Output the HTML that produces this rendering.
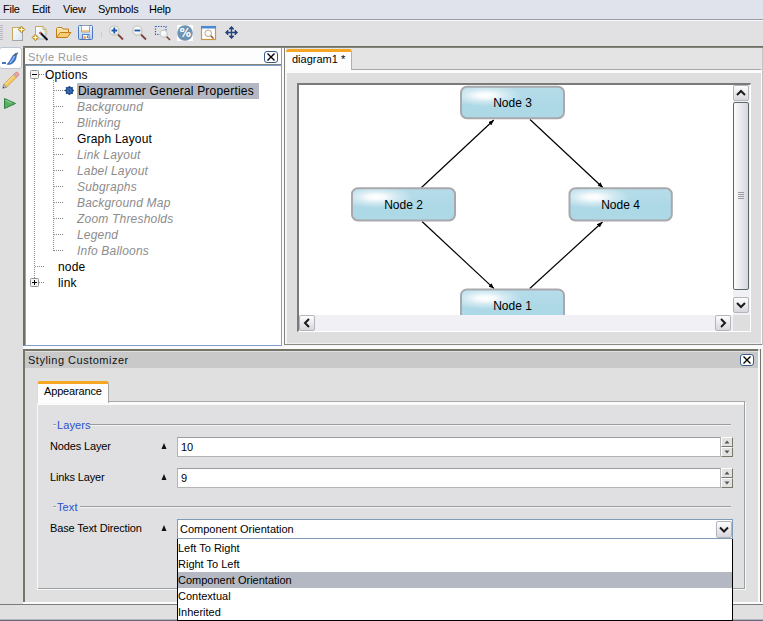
<!DOCTYPE html>
<html><head><meta charset="utf-8"><title>Diagrammer Designer</title>
<style>
html,body{margin:0;padding:0;}
body{width:763px;height:621px;overflow:hidden;background:#e0e0e0;position:relative;font-family:"Liberation Sans",sans-serif;font-size:11px;color:#000;}
.abs{position:absolute;}
#menubar{left:0;top:0;width:763px;height:19px;background:#e0e3ec;border-bottom:1px solid #9a9aa2;}
#menubar span{position:absolute;top:3px;font-size:11px;letter-spacing:-0.25px;}
#toolbar{left:0;top:20px;width:763px;height:26px;background:#e1e1e4;border-top:1px solid #fbfbfb;box-sizing:border-box;}
#leftbar{left:0;top:46px;width:23px;height:303px;background:#e0e0e0;}
#rules{left:23px;top:46px;width:259px;height:300px;box-sizing:border-box;border:2px solid #6e6e62;border-right:1px solid #7fa0cc;border-bottom:1px solid #7fa0cc;background:#fff;box-shadow:inset 1px 0 0 #8aa8d0;}
#ruleshead{left:0;top:0;width:256px;height:16px;background:#fdfdfd;border-bottom:1px solid #84847e;box-shadow:0 1px 0 #7fa0cc;}
#ruleshead .t{position:absolute;left:3px;top:3px;color:#9a9a9a;letter-spacing:0.4px;}
.tree{font-size:12px;letter-spacing:0.2px;white-space:nowrap;}
.tree div{position:absolute;height:16px;line-height:16px;}
.tree .g{color:#8c8c8c;font-style:italic;}
.dotsh{position:absolute;height:1px;background-image:linear-gradient(to right,#808080 1px,transparent 1px);background-size:2px 1px;}
.dotsv{position:absolute;width:1px;background-image:linear-gradient(to bottom,#808080 1px,transparent 1px);background-size:1px 2px;}

.sbtn{position:absolute;width:16px;height:16px;box-sizing:border-box;border:1px solid #b4b4bc;border-radius:2px;background:linear-gradient(to bottom,#fdfdfd 0%,#ececf0 45%,#d6d6dc 100%);}
.sbtn svg{position:absolute;left:0;top:0}

#bottom{left:23px;top:349px;width:735px;height:253px;box-sizing:border-box;border-top:2px solid #75756a;border-left:2px solid #75756a;background:#e0e0e0;}
#bhead{left:0;top:1px;width:733px;height:16px;background:#c9c9c9;}
#bhead .t{position:absolute;left:3px;top:2px;letter-spacing:0.5px;color:#111;}
.closeb{position:absolute;width:14px;height:12px;box-sizing:border-box;border:1px solid #3a5a8c;border-radius:3px;background:#fff;}
.closeb svg{position:absolute;left:0;top:0}
.lbl{position:absolute;font-size:11px;white-space:nowrap;letter-spacing:-0.15px;}
.fld{position:absolute;background:#fff;box-sizing:border-box;border:1px solid #b4b4b4;border-top-color:#9c9c9c;}
.fld span{position:absolute;left:3px;top:3px;font-size:11px;}
.tri{position:absolute;width:0;height:0;border-left:2.5px solid transparent;border-right:2.5px solid transparent;border-bottom:6px solid #111;}
.spin{position:absolute;width:12px;height:10px;box-sizing:border-box;border:1px solid;border-color:#fcfcfc #77776c #77776c #fcfcfc;background:#e2e2e2;}
.spin svg{position:absolute;left:0;top:0}
.gl{position:absolute;height:1px;background:#9c9c9c;box-shadow:0 1px 0 #f4f4f4;}
.gt{position:absolute;font-size:11px;color:#2a50d0;letter-spacing:0.1px;}
#pop{left:177px;top:539px;width:556px;height:82px;box-sizing:border-box;border:1px solid #000;border-top:none;background:#fff;}
#pop div{position:absolute;left:0;width:554px;height:16px;line-height:16px;font-size:11px;text-indent:0px;}
</style></head><body>
<div id="menubar" class="abs"><span style="left:3px">File</span><span style="left:32px">Edit</span><span style="left:63px">View</span><span style="left:98px">Symbols</span><span style="left:149px">Help</span></div>
<div id="toolbar" class="abs">
<svg class="abs" style="left:0;top:0" width="260" height="25" viewBox="0 21 260 25">
<defs>
<linearGradient id="docg" x1="0" y1="0" x2="1" y2="1"><stop offset="0" stop-color="#ffffff"/><stop offset="1" stop-color="#d4e6f2"/></linearGradient>
<radialGradient id="lens" cx="0.4" cy="0.35" r="0.7"><stop offset="0" stop-color="#fff"/><stop offset="1" stop-color="#e8eef4"/></radialGradient>
</defs>
<!-- grip -->
<g fill="#b8b8c4"><rect x="0" y="25" width="3" height="1"/><rect x="0" y="27" width="3" height="1"/><rect x="0" y="29" width="3" height="1"/><rect x="0" y="31" width="3" height="1"/><rect x="0" y="33" width="3" height="1"/><rect x="0" y="35" width="3" height="1"/><rect x="0" y="37" width="3" height="1"/><rect x="0" y="39" width="3" height="1"/></g>
<!-- new -->
<rect x="12.500" y="27.500" width="10" height="13" fill="url(#docg)" stroke="#a4a4a0" stroke-width="1"/>
<path d="M12.500,40 L12.500,27.500 L20,27.500" fill="none" stroke="#c8a858" stroke-width="1"/>
<path d="M21.500,26.200 L24.800,29.500 L21.500,32.800 L18.200,29.500 z" fill="#c8a030" stroke="#b08820" stroke-width="0.800"/>
<path d="M21.500,27.300 L21.500,31.700 M19.300,29.500 L23.700,29.500" stroke="#fffdf0" stroke-width="1"/>
<!-- wizard -->
<path d="M35.500,26.500 L43,26.500 L46,29.500 L46,39 L35.500,39 z" fill="url(#docg)" stroke="#b4b4ac" stroke-width="1"/>
<path d="M35.500,39 L35.500,26.500 L43,26.500 L46,29.500" fill="none" stroke="#c8a858" stroke-width="1"/>
<path d="M43,26.500 L43,29.500 L46,29.500" fill="#e8dcc0" stroke="#c8a858" stroke-width="0.800"/>
<path d="M40,32.500 L47.500,40" stroke="#101020" stroke-width="2" fill="none"/>
<path d="M39.600,32.100 L41,33.500" stroke="#c86050" stroke-width="2" fill="none"/>
<path d="M35.400,34.200 L38.700,37.500 L35.400,40.800 L32.100,37.500 z" fill="#c8a030" stroke="#b08820" stroke-width="0.800"/>
<path d="M35.400,35.300 L35.400,39.700 M33.200,37.500 L37.600,37.500" stroke="#fffdf0" stroke-width="1"/>
<g fill="#f0d030"><rect x="44.500" y="30.500" width="1" height="1"/><rect x="46.500" y="31" width="1" height="1"/><rect x="45.500" y="32.500" width="1" height="1"/><rect x="47" y="33" width="1" height="1"/></g>
<!-- folder -->
<path d="M56.500,37.500 L56.500,28.500 L57.500,27.500 L62,27.500 L63,29 L68.500,29 L68.500,32" fill="#fbe2a0" stroke="#c27c1c" stroke-width="1"/>
<path d="M56.500,37.500 L60.300,32.500 L71,32.500 L67.300,37.500 z" fill="#f8cc70" stroke="#c27c1c" stroke-width="1"/>
<path d="M58,28.500 L61.500,28.500" stroke="#fff8e0" stroke-width="1"/>
<!-- save -->
<linearGradient id="svg1" x1="0" y1="0" x2="0" y2="1"><stop offset="0" stop-color="#eef4fb"/><stop offset="1" stop-color="#b4cdea"/></linearGradient>
<rect x="78.500" y="25.500" width="14" height="14" rx="1" fill="url(#svg1)" stroke="#4c76c0" stroke-width="1"/>
<rect x="81.500" y="25.500" width="8" height="6.500" fill="#fbfdff" stroke="#8c98a8" stroke-width="0.800"/>
<rect x="82" y="30.300" width="7" height="1.400" fill="#f2b868"/>
<rect x="82.500" y="34.500" width="6.500" height="5" fill="#f6f8fa" stroke="#4c76c0" stroke-width="0.900"/>
<rect x="83.300" y="36.300" width="2.800" height="2.800" fill="#f0a848"/>
<rect x="87" y="35.500" width="1" height="2.500" fill="#708098"/>
<!-- sep -->
<rect x="101" y="32" width="1" height="5" fill="#c0ccd8"/>
<!-- zoom in -->
<path d="M118,34.500 L123,39.500" stroke="#7a4438" stroke-width="1.800"/>
<circle cx="114.300" cy="30.500" r="4.700" fill="url(#lens)" stroke="#c8c8b8" stroke-width="1.200"/>
<path d="M111.500,30.500 L117.200,30.500 M114.300,27.600 L114.300,33.400" stroke="#1c58a8" stroke-width="1.800"/>
<!-- zoom out -->
<path d="M141,34.500 L146,39.500" stroke="#7a4438" stroke-width="1.800"/>
<circle cx="137.400" cy="30.500" r="4.700" fill="url(#lens)" stroke="#c8c8b8" stroke-width="1.200"/>
<path d="M134.500,30.500 L140.300,30.500" stroke="#1c58a8" stroke-width="1.800"/>
<!-- zoom rect -->
<rect x="155.500" y="26.500" width="10.500" height="8" fill="none" stroke="#2860b8" stroke-width="1.200" stroke-dasharray="1.300,1.300"/>
<path d="M166.500,36.500 L170,40" stroke="#7a4438" stroke-width="1.600"/>
<circle cx="163.700" cy="33.700" r="3.600" fill="url(#lens)" stroke="#c8c8c0" stroke-width="1.100"/>
<!-- percent -->
<rect x="177" y="25" width="16" height="16" fill="#fdfdfd"/>
<circle cx="185" cy="33" r="7.800" fill="#6f93b2"/>
<text x="185.200" y="37.300" style="font-family:'DejaVu Sans','Liberation Sans',sans-serif;font-size:11.500px;font-weight:700" fill="#fff" text-anchor="middle">%</text>
<!-- fit -->
<rect x="201.500" y="26.500" width="14" height="13" fill="#fff" stroke="#c89a3c" stroke-width="1.200"/>
<rect x="201" y="26" width="15" height="2.500" fill="#4a88d8"/>
<path d="M210.500,35.500 L213.500,38.500" stroke="#a04830" stroke-width="1.400"/>
<circle cx="208.200" cy="33.300" r="3.300" fill="#fafafa" stroke="#b8a888" stroke-width="1"/>
<!-- pan -->
<g stroke="#28467a" stroke-width="1.400" fill="none"><path d="M231.500,27 L231.500,38 M226,32.500 L237,32.500"/><path fill="#28467a" stroke-width="0.800" d="M229,29 L231.500,26.300 L234,29 z M229,36 L231.500,38.700 L234,36 z M228,30 L225.300,32.500 L228,35 z M235,30 L237.700,32.500 L235,35 z"/></g>
</svg>
</div>
<div id="leftbar" class="abs">
<div class="abs" style="left:-1px;top:1px;width:23px;height:22px;box-sizing:border-box;border:1px solid #bcc6d2;border-radius:3px;background:#fff"></div>
<svg class="abs" style="left:0;top:0" width="23" height="80" viewBox="0 46 23 80">
<!-- feather -->
<path d="M2,63 L6,63" stroke="#3468b8" stroke-width="1.800"/>
<path d="M7,64.300 C9,62.500 10.500,59.500 12,57 C13,55.300 14.500,54 16,53.500 C16.600,55 16.500,57 15.800,59 C14.800,61.500 13,63.500 10.500,64.200 C9.300,64.500 8,64.600 7,64.300 z" fill="#3a74cc" stroke="#2a58a8" stroke-width="0.500"/>
<path d="M10,62.800 C12,61 13.500,58.500 14.500,56" stroke="#9cc0ee" stroke-width="1.300" fill="none"/>
<path d="M13.300,55.800 L15,54 L17.900,52.700 L16.600,55.200" fill="#5c6c80" stroke="#4c5c70" stroke-width="0.600"/>
<!-- pencil -->
<path d="M3.700,84.500 L13.600,74.600 L16.400,77.400 L6.500,87.300 z" fill="#f2c860" stroke="#c8963c" stroke-width="0.700"/>
<path d="M5.200,84.500 L14.300,75.400" stroke="#fbe8a8" stroke-width="1"/>
<path d="M13.600,74.600 L15.400,72.800 C16.100,72.100 17.200,72.100 17.900,72.800 L18.300,73.200 C19,73.900 19,75 18.300,75.700 L16.400,77.400 z" fill="#f0a0a0" stroke="#c87070" stroke-width="0.700"/>
<path d="M13.600,74.600 L16.400,77.400" stroke="#b0b0c0" stroke-width="1.200"/>
<path d="M3.700,84.500 L2.800,88.200 L6.500,87.300 z" fill="#e8d0a8" stroke="#5068a8" stroke-width="0.600"/>
<path d="M2.800,88.200 L3.300,86.500 L4.500,87.700 z" fill="#283c90"/>
<!-- play -->
<path d="M4.500,98.500 L15.500,103.500 L4.500,108.500 z" fill="#58b060" stroke="#2e8440" stroke-width="1"/>
<path d="M5.500,100.300 L11.500,103" stroke="#8cd090" stroke-width="1.200"/>
</svg>
</div>
<div id="rules" class="abs">
 <div id="ruleshead" class="abs"><span class="t">Style Rules</span><div class="closeb" style="left:239px;top:3px"><svg width="12" height="10"><path d="M2.500,1.500 L9.500,8.500 M9.500,1.500 L2.500,8.500" stroke="#000" stroke-width="1.400" fill="none"/></svg></div></div>
 <div class="tree">
  <svg class="abs" style="left:0;top:18px" width="80" height="230" viewBox="25 66 80 230">
   <g stroke="#8a8a8a" stroke-width="1" stroke-dasharray="1,1" fill="none">
    <path d="M34.500,79 L34.500,278"/><path d="M53.500,80 L53.500,251"/>
    <path d="M39,74.500 L45,74.500"/>
    <path d="M54,90.500 L65,90.500"/><path d="M54,106.500 L63,106.500"/><path d="M54,122.500 L63,122.500"/><path d="M54,138.500 L63,138.500"/><path d="M54,154.500 L63,154.500"/><path d="M54,170.500 L63,170.500"/><path d="M54,186.500 L63,186.500"/><path d="M54,202.500 L63,202.500"/><path d="M54,218.500 L63,218.500"/><path d="M54,234.500 L63,234.500"/><path d="M54,250.500 L63,250.500"/>
    <path d="M35,266.500 L45,266.500"/><path d="M39,282.500 L45,282.500"/>
   </g>
   <rect x="30.500" y="70.500" width="8" height="8" rx="1" fill="#f4f4f4" stroke="#909090"/><path d="M32,74.500 L37,74.500" stroke="#000" stroke-width="1"/>
   <rect x="30.500" y="278.500" width="8" height="8" rx="1" fill="#f4f4f4" stroke="#909090"/><path d="M32,282.500 L37,282.500 M34.500,280 L34.500,285" stroke="#000" stroke-width="1"/>
   <!-- gear -->
   <circle cx="69.400" cy="90.500" r="3.800" fill="#1c4c90"/>
   <g stroke="#1c4c90" stroke-width="1.600"><path d="M69.400,86 L69.400,95 M64.900,90.500 L73.900,90.500 M66.200,87.300 L72.600,93.700 M72.600,87.300 L66.200,93.700"/></g>
   <circle cx="69.400" cy="90.500" r="2.300" fill="#4a7ac0"/>
   <circle cx="69.400" cy="90.500" r="1" fill="#143c78"/>
  </svg>

  <div style="left:20px;top:19px">Options</div>
  <div style="left:52px;top:35px;width:182px;background:#b4b8c2"></div>
  <div style="left:53px;top:35px">Diagrammer General Properties</div>
  <div class="g" style="left:52px;top:51px">Background</div>
  <div class="g" style="left:52px;top:67px">Blinking</div>
  <div style="left:52px;top:83px">Graph Layout</div>
  <div class="g" style="left:52px;top:99px">Link Layout</div>
  <div class="g" style="left:52px;top:115px">Label Layout</div>
  <div class="g" style="left:52px;top:131px">Subgraphs</div>
  <div class="g" style="left:52px;top:147px">Background Map</div>
  <div class="g" style="left:52px;top:163px">Zoom Thresholds</div>
  <div class="g" style="left:52px;top:179px">Legend</div>
  <div class="g" style="left:52px;top:195px">Info Balloons</div>
  <div style="left:33px;top:211px">node</div>
  <div style="left:33px;top:227px">link</div>
 </div>
</div>

<div class="abs" style="left:23px;top:46px;width:740px;height:1px;background:#6e6e62"></div>
<div class="abs" style="left:23px;top:47px;width:740px;height:1px;background:#84847c"></div>
<div class="abs" style="left:282px;top:48px;width:2px;height:298px;background:#fcfcfc"></div><div class="abs" style="left:284px;top:47px;width:1px;height:298px;background:#82827c"></div>
<div class="abs" style="left:285px;top:48px;width:1px;height:298px;background:#fafafa"></div>
<div id="tabpane" class="abs" style="left:286px;top:48px;width:477px;height:298px;background:#e4e4e4"></div>
<div class="abs" style="left:286px;top:69px;width:475px;height:1px;background:#a8a8a8"></div>
<div class="abs" style="left:286px;top:70px;width:475px;height:3px;background:#fbfbfb"></div>
<div class="abs" style="left:286px;top:73px;width:475px;height:270px;background:#dedede;border-left:1px solid #f4f4f4;box-sizing:border-box"></div>
<div class="abs" style="left:761px;top:70px;width:1px;height:274px;background:#fafafa"></div><div class="abs" style="left:762px;top:48px;width:1px;height:297px;background:#c4c4c4"></div>
<div class="abs" style="left:284px;top:344px;width:478px;height:1px;background:#8a8a86"></div><div class="abs" style="left:286px;top:343px;width:476px;height:1px;background:#f0f0f0"></div>
<div id="tab1" class="abs" style="left:286px;top:49px;width:66px;height:21px;background:#fdfdfd;border-top:3px solid #f5a623;border-radius:3px 3px 0 0;border-right:1px solid #b0b0b0;box-sizing:border-box"><span style="position:absolute;left:6px;top:1px;font-size:11px;">diagram1 *</span></div>
<div id="view" class="abs" style="left:297px;top:83px;width:454px;height:249px;background:#fff;border-top:2px solid #7a7a7a;border-left:2px solid #7a7a7a;border-right:1px solid #fff;border-bottom:1px solid #fff;box-sizing:border-box">
<svg class="abs" style="left:0;top:0" width="434" height="230" viewBox="299 85 434 230">
<defs>
<radialGradient id="hl" cx="0.23" cy="0.26" r="0.37"><stop offset="0" stop-color="#fff" stop-opacity="1"/><stop offset="0.22" stop-color="#fff" stop-opacity="0.9"/><stop offset="0.55" stop-color="#fff" stop-opacity="0.42"/><stop offset="1" stop-color="#fff" stop-opacity="0"/></radialGradient>
<linearGradient id="nb" x1="0" y1="0" x2="0" y2="1"><stop offset="0" stop-color="#b6dce9"/><stop offset="0.45" stop-color="#b0d9e7"/><stop offset="0.55" stop-color="#add8e6"/><stop offset="1" stop-color="#add8e6"/></linearGradient>
<marker id="ar" viewBox="0 0 5 4" refX="5" refY="2" markerWidth="5.500" markerHeight="4.400" orient="auto" markerUnits="userSpaceOnUse"><path d="M0,0 L5,2 L0,4 z" fill="#000"/></marker>
</defs>
<g stroke="#000" stroke-width="1.200" fill="none">
<line x1="421.5" y1="187.500" x2="493.8" y2="120" marker-end="url(#ar)"/>
<line x1="530" y1="119.500" x2="603" y2="187.700" marker-end="url(#ar)"/>
<line x1="422" y1="221.500" x2="494" y2="288.600" marker-end="url(#ar)"/>
<line x1="529.800" y1="288.500" x2="602.500" y2="222" marker-end="url(#ar)"/>
</g>
<g font-family="Liberation Sans, sans-serif" font-size="12" text-anchor="middle" fill="#000">
<g><rect x="461" y="86.800" width="103" height="31.500" rx="6" fill="url(#nb)" stroke="#a9a9ad" stroke-width="2"/><rect x="462" y="87.800" width="101" height="29.500" rx="5" fill="url(#hl)"/><text x="512.5" y="107.300">Node 3</text></g>
<g><rect x="352" y="188.200" width="103" height="32.300" rx="6" fill="url(#nb)" stroke="#a9a9ad" stroke-width="2"/><rect x="353" y="189.200" width="101" height="30.300" rx="5" fill="url(#hl)"/><text x="403.5" y="209.400">Node 2</text></g>
<g><rect x="569.500" y="188.200" width="102.300" height="32.300" rx="6" fill="url(#nb)" stroke="#a9a9ad" stroke-width="2"/><rect x="570.500" y="189.200" width="100.300" height="30.300" rx="5" fill="url(#hl)"/><text x="620.5" y="209.400">Node 4</text></g>
<g><rect x="461" y="289.400" width="103" height="32.300" rx="6" fill="url(#nb)" stroke="#a9a9ad" stroke-width="2"/><rect x="462" y="290.400" width="101" height="30.300" rx="5" fill="url(#hl)"/><text x="512.5" y="310.200">Node 1</text></g>
</g>
</svg>

<div class="abs" style="left:434px;top:0;width:17px;height:230px;background:#f1f1f5"></div>
<div class="abs" style="left:0;top:230px;width:434px;height:16px;background:#f1f1f5"></div>
<div class="abs" style="left:434px;top:230px;width:17px;height:16px;background:#dedede"></div>
<div class="sbtn" style="left:434px;top:0"><svg width="14" height="14"><path d="M3,9 L7,5 L11,9" fill="none" stroke="#1a1a1a" stroke-width="2"/></svg></div>
<div class="sbtn" style="left:434px;top:212px"><svg width="14" height="14"><path d="M3,5 L7,9 L11,5" fill="none" stroke="#1a1a1a" stroke-width="2"/></svg></div>
<div class="abs" style="left:434px;top:17px;width:16px;height:188px;box-sizing:border-box;border:1px solid #5c6666;border-radius:2px;background:linear-gradient(to right,#fcfcfc 0%,#ececf2 40%,#d6d6de 100%)">
 <div class="abs" style="left:4px;top:89px;width:6px;height:1px;background:#9a9aa2;box-shadow:0 2px 0 #9a9aa2,0 4px 0 #9a9aa2,0 6px 0 #9a9aa2"></div>
</div>
<div class="sbtn" style="left:0;top:230px"><svg width="14" height="14"><path d="M9,3 L5,7 L9,11" fill="none" stroke="#1a1a1a" stroke-width="2"/></svg></div>
<div class="sbtn" style="left:416px;top:230px"><svg width="14" height="14"><path d="M5,3 L9,7 L5,11" fill="none" stroke="#1a1a1a" stroke-width="2"/></svg></div>

</div>


<div class="abs" style="left:23px;top:346px;width:740px;height:3px;background:#fbfbfb"></div><div class="abs" style="left:282px;top:345px;width:481px;height:1px;background:#f4f4f4"></div>
<div id="bottom" class="abs">
 <div id="bhead" class="abs"><span class="t">Styling Customizer</span>
  <div class="closeb" style="left:715px;top:2px"><svg width="12" height="10"><path d="M2.5,1.5 L9.500,8.500 M9.500,1.500 L2.500,8.500" stroke="#000" stroke-width="1.4" fill="none"/></svg></div>
 </div>
</div>
<div class="abs" style="left:758px;top:351px;width:2px;height:251px;background:#fbfbfb"></div>
<div class="abs" style="left:760px;top:349px;width:1px;height:253px;background:#74746a"></div>
<div class="abs" style="left:761px;top:349px;width:2px;height:253px;background:#f4f4f4"></div>
<!-- status bar -->
<div class="abs" style="left:23px;top:602px;width:740px;height:2px;background:#fbfbfb"></div>
<div class="abs" style="left:0;top:604px;width:763px;height:1px;background:#7c7c7c"></div>
<div class="abs" style="left:0;top:605px;width:763px;height:14px;background:#e0e0e0"></div>
<div class="abs" style="left:0;top:619px;width:763px;height:1px;background:#b4b4bc"></div>
<div class="abs" style="left:0;top:620px;width:763px;height:1px;background:#686880"></div>
<!-- tab content pane -->
<div class="abs" style="left:37px;top:401px;width:709px;height:189px;box-sizing:border-box;border:1px solid #f8f8f8;border-top-color:#a8a8a8;background:#e0e0e2"></div><div class="abs" style="left:38px;top:402px;width:707px;height:187px;box-sizing:border-box;border-right:1px solid #98a0a0;border-bottom:1px solid #98a0a0"></div>
<div class="abs" style="left:38px;top:402px;width:706px;height:3px;background:#fbfbfb"></div>
<div class="abs" style="left:37px;top:381px;width:72px;height:22px;background:#fdfdfd;border-top:3px solid #f5a623;border-radius:3px 3px 0 0;border-right:1px solid #a8a8a8;border-left:1px solid #dcdcdc;box-sizing:border-box"><span style="position:absolute;left:6px;top:1px;font-size:11px;letter-spacing:-0.15px">Appearance</span></div>
<!-- groups -->
<div class="gl" style="left:53px;top:424px;width:3px"></div><div class="gl" style="left:90px;top:424px;width:641px"></div>
<div class="gt" style="left:57px;top:419px">Layers</div>
<div class="lbl" style="left:50px;top:440px">Nodes Layer</div>
<svg class="abs" style="left:161px;top:443px" width="7" height="7"><path d="M0.500,6 L3,0 L5.500,6 z" fill="#111"/></svg>
<div class="fld" style="left:177px;top:437px;width:544px;height:20px"><span>10</span></div>
<div class="spin" style="left:721px;top:437px"><svg width="10" height="8"><path d="M2.500,5.500 L5,2.500 L7.500,5.500 z" fill="#555"/></svg></div><div class="spin" style="left:721px;top:447px"><svg width="10" height="8"><path d="M2.500,2.500 L5,5.500 L7.500,2.500 z" fill="#555"/></svg></div>
<div class="lbl" style="left:50px;top:471px">Links Layer</div>
<svg class="abs" style="left:161px;top:474px" width="7" height="7"><path d="M0.500,6 L3,0 L5.500,6 z" fill="#111"/></svg>
<div class="fld" style="left:177px;top:468px;width:544px;height:20px"><span>9</span></div>
<div class="spin" style="left:721px;top:468px"><svg width="10" height="8"><path d="M2.500,5.500 L5,2.500 L7.500,5.500 z" fill="#555"/></svg></div><div class="spin" style="left:721px;top:478px"><svg width="10" height="8"><path d="M2.500,2.500 L5,5.500 L7.500,2.500 z" fill="#555"/></svg></div>
<div class="gl" style="left:53px;top:506px;width:3px"></div><div class="gl" style="left:80px;top:506px;width:651px"></div>
<div class="gt" style="left:57px;top:501px">Text</div>
<div class="lbl" style="left:50px;top:522px">Base Text Direction</div>
<svg class="abs" style="left:161px;top:525px" width="7" height="7"><path d="M0.500,6 L3,0 L5.500,6 z" fill="#111"/></svg>
<div class="fld" style="left:177px;top:519px;width:556px;height:20px;border-color:#7f9db9"><span style="top:3px;left:2px">Component Orientation</span>
 <div class="sbtn" style="left:538px;top:1px;height:17px"><svg width="14" height="15"><path d="M3,5.5 L7,9.500 L11,5.500" fill="none" stroke="#1a1a1a" stroke-width="2"/></svg></div>
</div>
<div id="pop" class="abs">
 <div style="top:1px">Left To Right</div>
 <div style="top:17px">Right To Left</div>
 <div style="top:33px;background:#b4b8c2">Component Orientation</div>
 <div style="top:49px">Contextual</div>
 <div style="top:65px">Inherited</div>
</div>

</body></html>
